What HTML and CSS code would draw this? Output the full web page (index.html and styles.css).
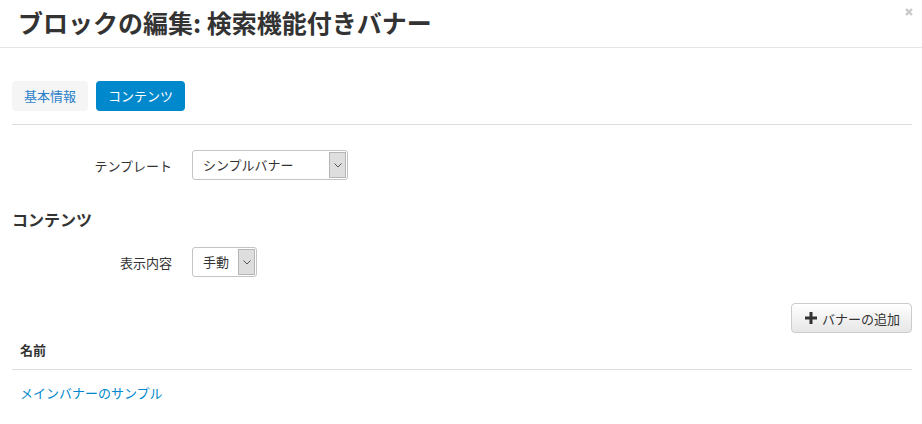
FILE: index.html
```html
<!DOCTYPE html>
<html lang="ja">
<head>
    <meta charset="UTF-8">
    <title>ブロックの編集</title>
    <link rel="stylesheet" href="styles.css">
</head>
<body>
<div class="modal">
    <div class="modal-header">
        <h2 class="modal-title">ブロックの編集: 検索機能付きバナー</h2>
        <span class="close" title="閉じる">
            <svg width="8" height="8" viewBox="0 0 8 8"><path d="M1 1L7 7M7 1L1 7" stroke="#c9c9c9" stroke-width="2.4"/></svg>
        </span>
    </div>

    <div class="modal-body">
        <ul class="tabs">
            <li><a href="#">基本情報</a></li>
            <li class="active"><a href="#">コンテンツ</a></li>
        </ul>

        <div class="form-row">
            <label>テンプレート</label>
            <div class="select wide">
                <span class="value">シンプルバナー</span>
                <span class="arrow"><svg width="8" height="5" viewBox="0 0 8 5"><path d="M0.5 0.5L4 4L7.5 0.5" fill="none" stroke="#555" stroke-width="1"/></svg></span>
            </div>
        </div>

        <h3 class="section-title">コンテンツ</h3>

        <div class="form-row">
            <label>表示内容</label>
            <div class="select narrow">
                <span class="value">手動</span>
                <span class="arrow"><svg width="8" height="5" viewBox="0 0 8 5"><path d="M0.5 0.5L4 4L7.5 0.5" fill="none" stroke="#555" stroke-width="1"/></svg></span>
            </div>
        </div>

        <div class="actions">
            <button class="btn">
                <svg width="12" height="12" viewBox="0 0 12 12"><path d="M4.5 0H7.5V4.5H12V7.5H7.5V12H4.5V7.5H0V4.5H4.5Z" fill="#333"/></svg>
                バナーの追加
            </button>
        </div>

        <table class="list">
            <thead>
                <tr><th>名前</th></tr>
            </thead>
            <tbody>
                <tr><td><a href="#">メインバナーのサンプル</a></td></tr>
            </tbody>
        </table>
    </div>
</div>
</body>
</html>
```

FILE: styles.css
```css
* {
    margin: 0;
    padding: 0;
    box-sizing: border-box;
}

body {
    font-family: "Noto Sans CJK JP", "Noto Sans", sans-serif;
    font-size: 13px;
    color: #333;
    background-color: #fff;
}

a {
    color: #0088cc;
    text-decoration: none;
}

/* Header */
.modal-header {
    position: relative;
    height: 48px;
    padding: 0 18px;
    display: flex;
    align-items: center;
    border-bottom: 1px solid #e5e5e5;
}

.modal-title {
    font-size: 25px;
    font-weight: bold;
    line-height: 1;
    color: #333;
    margin-top: -3px;
}

.close {
    position: absolute;
    top: 8px;
    right: 9px;
    line-height: 0;
}

/* Body */
.modal-body {
    padding: 33px 10px 0 12px;
}

.tabs {
    list-style: none;
    display: flex;
    gap: 8px;
    padding-bottom: 13px;
    border-bottom: 1px solid #ddd;
}

.tabs a {
    display: block;
    height: 30px;
    line-height: 30px;
    padding: 0 12px;
    border-radius: 4px;
    background-color: #f5f5f5;
    color: #2a7fc9;
}

.tabs .active a {
    background-color: #0088cc;
    color: #fff;
}

.form-row {
    display: flex;
    align-items: center;
    gap: 20px;
    margin-top: 25px;
}

.form-row label {
    width: 160px;
    text-align: right;
    color: #333;
}

.select {
    display: flex;
    align-items: stretch;
    height: 30px;
    border: 1px solid #c4c4c4;
    border-radius: 3px;
    background-color: #fff;
    overflow: hidden;
}

.select .value {
    flex: 1;
    line-height: 28px;
    padding: 0 0 0 10px;
    color: #333;
    white-space: nowrap;
}

.select.wide {
    width: 156px;
}

.select.narrow {
    width: 65px;
}

.select .arrow {
    width: 17px;
    margin: 1px;
    background-color: #dedede;
    border: 1px solid #b5b5b5;
    display: flex;
    align-items: center;
    justify-content: center;
}

.section-title {
    font-size: 16px;
    font-weight: bold;
    line-height: 20px;
    margin-top: 29px;
    margin-bottom: -7px;
}

.actions {
    display: flex;
    justify-content: flex-end;
    margin-top: 25px;
}

.btn {
    display: flex;
    align-items: center;
    gap: 5px;
    height: 30px;
    margin-top: 1px;
    padding: 0 11px 0 13px;
    font-family: inherit;
    font-size: 13px;
    color: #333;
    background: linear-gradient(#fff, #e6e6e6);
    border: 1px solid #ccc;
    border-radius: 4px;
    cursor: pointer;
}

/* Table */
.list {
    width: 100%;
    border-collapse: collapse;
}

.list th {
    text-align: left;
    font-weight: bold;
    padding: 8px 8px 10px;
    line-height: 18px;
    border-bottom: 1px solid #ddd;
}

.list td {
    padding: 14px 8px 6px;
    line-height: 18px;
}
```
